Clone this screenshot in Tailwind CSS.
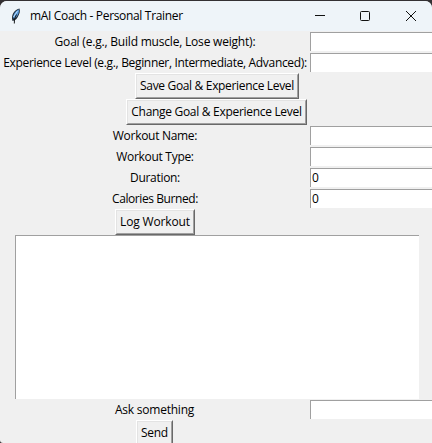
<!DOCTYPE html>
<html lang="en">
<head>
<meta charset="utf-8">
<title>mAI Coach - Personal Trainer</title>
<script src="https://cdn.jsdelivr.net/npm/@tailwindcss/browser@4"></script>
</head>
<body class="bg-[#333033] overflow-hidden">
<div class="w-[432px] h-[443px] pt-px overflow-hidden font-['Open_Sans','Noto_Sans',sans-serif] text-[12px] text-black whitespace-nowrap">
 <div class="h-[442px] rounded-t-[7px] rounded-bl-[3px] overflow-hidden bg-[#f0f0f0]">
  <header class="flex h-[30px] items-center bg-[#eef4f9]">
   <svg class="ml-[10px] w-[12px] h-[18px] shrink-0" viewBox="0 0 12 18">
    <path d="M2.500 14C1.500 11 2 7.500 4 5C5.500 3 7.500 2 9.500 1.500C10.300 4.500 9.500 7 8 9.500C7 12 5.500 13 4 13.500Z" fill="#1c2733"/>
    <path d="M3 10C3.500 7 5.500 4 8.800 2.300C9.500 4.500 8.500 7.500 6.500 10L4 12Z" fill="#5a9bdc"/>
    <path d="M3.500 10L7.500 4" stroke="#b8dcfa" stroke-width="1"/>
    <path d="M4.300 16.500L4.500 12L6.500 7.500" stroke="#17191c" stroke-width="1" fill="none"/>
   </svg>
   <h1 class="ml-[8px] w-[153px] text-[12px] leading-[18px] tracking-[-0.33px]">mAI Coach - Personal Trainer</h1>
   <svg class="ml-[132px] w-[102px] h-[12px] shrink-0" viewBox="0 0 102 12" fill="none" stroke="#111" stroke-width="1">
    <path d="M0 5.500H10"/><rect x="45.500" y="1.500" width="9" height="9" rx="1"/><path d="M91 1L101 11M101 1L91 11"/>
   </svg>
  </header>
  <main class="w-[434px]">
   <div class="grid grid-cols-[310px_124px] auto-rows-[21px]">
    <label class="flex items-center justify-center tracking-[-0.2px]">Goal (e.g., Build muscle, Lose weight):</label>
    <div class="mt-px h-[19px] bg-white border-t border-l border-[#a0a0a0]"></div>
    <label class="flex items-center justify-center tracking-[-0.33px]">Experience Level (e.g., Beginner, Intermediate, Advanced):</label>
    <div class="mt-px h-[19px] bg-white border-t border-l border-[#a0a0a0]"></div>
   </div>
   <div class="flex flex-col items-center">
    <button class="w-[164px] h-[26px] border border-t-white border-l-white border-r-[#696969] border-b-[#696969]"><span class="flex h-full items-center justify-center border border-t-[#e3e3e3] border-l-[#e3e3e3] border-r-[#a0a0a0] border-b-[#a0a0a0] tracking-[-0.33px]">Save Goal &amp; Experience Level</span></button>
    <button class="mr-px w-[181px] h-[26px] border border-t-white border-l-white border-r-[#696969] border-b-[#696969]"><span class="flex h-full items-center justify-center border border-t-[#e3e3e3] border-l-[#e3e3e3] border-r-[#a0a0a0] border-b-[#a0a0a0] tracking-[-0.3px]">Change Goal &amp; Experience Level</span></button>
   </div>
   <div class="grid grid-cols-[310px_124px] auto-rows-[21px]">
    <label class="flex items-center justify-center tracking-[-0.3px]">Workout Name:</label>
    <div class="mt-px h-[19px] bg-white border-t border-l border-[#a0a0a0]"></div>
    <label class="flex items-center justify-center tracking-[-0.3px]">Workout Type:</label>
    <div class="mt-px h-[19px] bg-white border-t border-l border-[#a0a0a0]"></div>
    <label class="flex items-center justify-center tracking-[-0.3px]">Duration:</label>
    <div class="mt-px h-[19px] bg-white border-t border-l border-[#a0a0a0] pl-px leading-[18px]">0</div>
    <label class="flex items-center justify-center tracking-[-0.42px]">Calories Burned:</label>
    <div class="mt-px h-[19px] bg-white border-t border-l border-[#a0a0a0] pl-px leading-[18px]">0</div>
   </div>
   <div class="flex w-[310px] justify-center">
    <button class="w-[80px] h-[26px] border border-t-white border-l-white border-r-[#696969] border-b-[#696969]"><span class="flex h-full items-center justify-center border border-t-[#e3e3e3] border-l-[#e3e3e3] border-r-[#a0a0a0] border-b-[#a0a0a0] tracking-[-0.15px]">Log Workout</span></button>
   </div>
   <div class="mx-[15px] h-[164px] bg-white border-t border-l border-[#a0a0a0]"></div>
   <div class="grid grid-cols-[310px_124px] auto-rows-[21px]">
    <label class="flex items-center justify-center pr-px tracking-[-0.22px]">Ask something</label>
    <div class="mt-px h-[19px] bg-white border-t border-l border-[#a0a0a0]"></div>
   </div>
   <div class="flex w-[309px] justify-center">
    <button class="w-[37px] h-[26px] border border-t-white border-l-white border-r-[#696969] border-b-[#696969]"><span class="flex h-full items-center justify-center border border-t-[#e3e3e3] border-l-[#e3e3e3] border-r-[#a0a0a0] border-b-[#a0a0a0] tracking-[-0.3px]">Send</span></button>
   </div>
  </main>
 </div>
</div>
</body>
</html>
